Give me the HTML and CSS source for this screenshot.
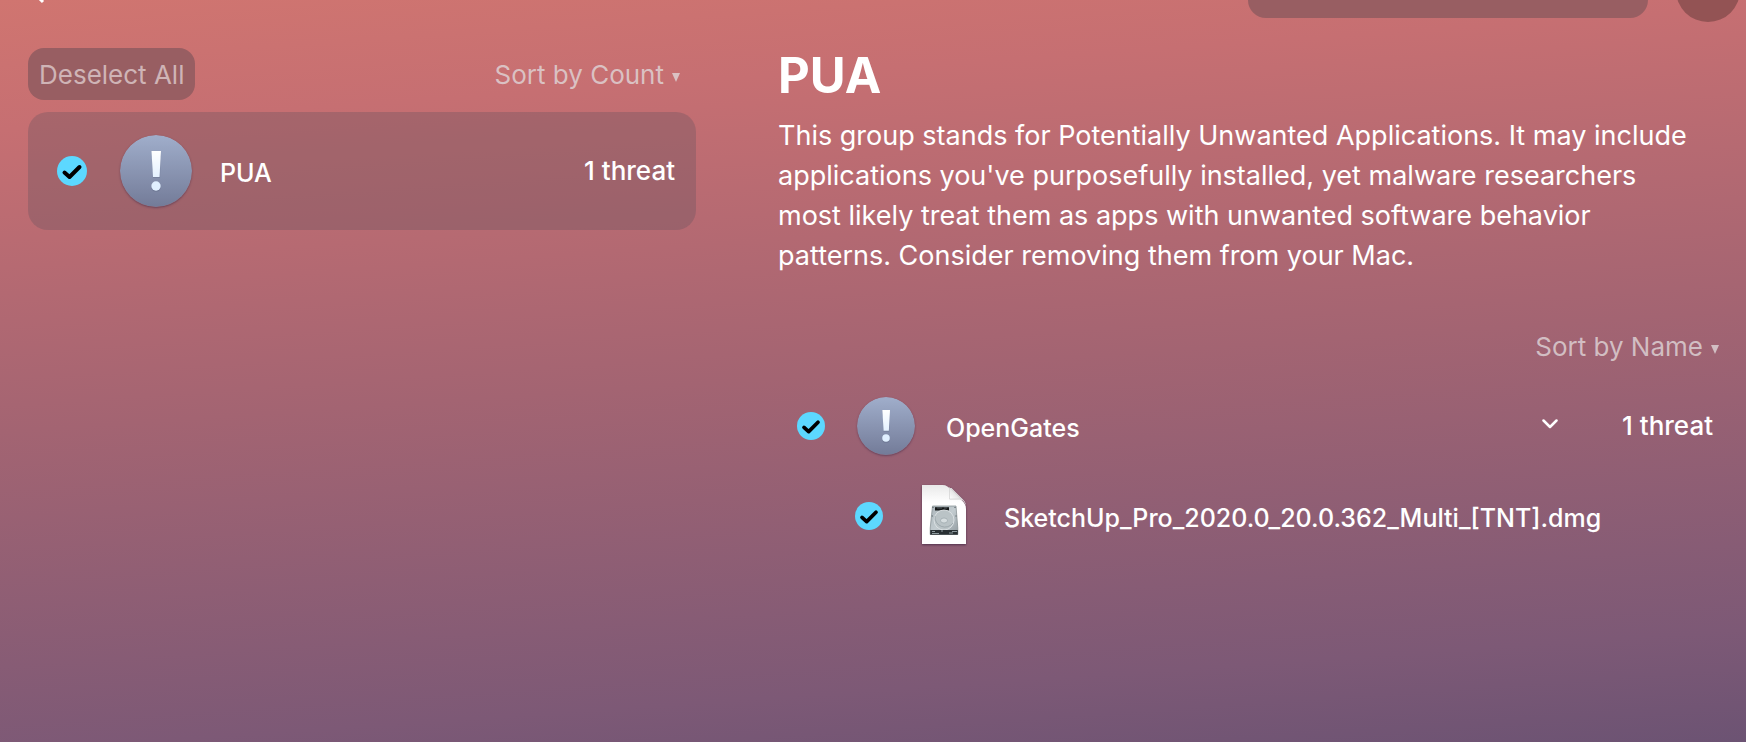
FILE: index.html
```html
<!DOCTYPE html>
<html lang="en">
<head>
<meta charset="utf-8">
<meta name="viewport" content="width=device-width, initial-scale=1">
<title>PUA</title>
<link rel="stylesheet" href="styles.css">
</head>
<body>
<svg class="defs" aria-hidden="true">
  <defs>
    <linearGradient id="badge" x1="0" y1="0" x2="0" y2="1"><stop offset="0" stop-color="#a0aecb"/><stop offset="1" stop-color="#737b98"/></linearGradient>
    <linearGradient id="mark" x1="0" y1="0" x2="0" y2="1"><stop offset="0" stop-color="#ffffff"/><stop offset="1" stop-color="#e4f1ff"/></linearGradient>
    <linearGradient id="metal" x1="0" y1="0" x2="1" y2="1"><stop offset="0" stop-color="#a9b3b8"/><stop offset="0.5" stop-color="#c3ccd0"/><stop offset="1" stop-color="#8f999e"/></linearGradient>
    <linearGradient id="fold" x1="0" y1="1" x2="1" y2="0"><stop offset="0" stop-color="#ffffff"/><stop offset="1" stop-color="#c9c9c9"/></linearGradient>
    <linearGradient id="paper" x1="0" y1="0" x2="0" y2="1"><stop offset="0" stop-color="#e9e9e9"/><stop offset="0.3" stop-color="#ffffff"/></linearGradient>
    <symbol id="alert" viewBox="0 0 72 72">
      <circle cx="36" cy="36" r="36" fill="url(#badge)"/>
      <path d="M32 17h9l-1 26h-7z" fill="#59627f" opacity=".3"/>
      <path d="M31.500 16h9.500l-1.500 26h-6.500z" fill="url(#mark)"/>
      <circle cx="36" cy="52" r="4.800" fill="#59627f" opacity=".35"/>
      <circle cx="36" cy="51" r="4.700" fill="#e0efff"/>
    </symbol>
  </defs>
</svg>
<header class="topbar">
  <button class="back" type="button" aria-label="Back"><svg viewBox="0 0 16 28"><path d="M14 1 2 14l12 12" /></svg></button>
  <input class="search" type="search" aria-label="Search">
  <button class="profile" type="button" aria-label="Account"></button>
</header>
<main class="columns">
  <section class="groups" aria-label="Threat groups">
    <div class="toolbar">
      <button class="deselect" type="button">Deselect All</button>
      <button class="sort" type="button">Sort by Count <svg class="caret" viewBox="0 0 8 9"><path d="M0 0h8L4 9z"/></svg></button>
    </div>
    <div class="card">
      <input class="check" type="checkbox" id="group-pua" checked>
      <svg class="alert" aria-hidden="true"><use href="#alert"/></svg>
      <label class="name" for="group-pua">PUA</label>
      <span class="count">1 threat</span>
    </div>
  </section>
  <section class="details">
    <h1>PUA</h1>
    <p>This group stands for Potentially Unwanted Applications. It may include applications you've purposefully installed, yet malware researchers most likely treat them as apps with unwanted software behavior patterns. Consider removing them from your Mac.</p>
    <button class="sort sort-name" type="button">Sort by Name <svg class="caret" viewBox="0 0 8 9"><path d="M0 0h8L4 9z"/></svg></button>
    <div class="threat">
      <input class="check" type="checkbox" id="opengates" checked>
      <svg class="alert" aria-hidden="true"><use href="#alert"/></svg>
      <label class="name" for="opengates">OpenGates</label>
      <button class="expand" type="button" aria-label="Collapse OpenGates"><svg viewBox="0 0 16 10"><path d="M1.500 1.500 8 8l6.500-6.500"/></svg></button>
      <span class="count">1 threat</span>
    </div>
    <div class="threat file">
      <input class="check" type="checkbox" id="dmg" checked>
      <svg class="document" viewBox="0 0 44 59" aria-hidden="true">
        <path d="M0 0h20.500c4 0 6 2 9 5l10 10c3 3 4.500 5 4.500 9v35H0z" fill="url(#paper)"/>
        <path d="M27.500 3v11.500H38c2.500 0 4.500 2 6 6 0-3-2-5-4.500-7.500L29.500 3z" fill="#e3e3e3"/>
        <path d="M27.500 2.500v11.500H39z" fill="url(#fold)" stroke="#cfcfcf" stroke-width=".6"/>
        <path d="M10.500 21h23.500l1.800 22v6.500H8.200V43z" fill="url(#metal)" stroke="#7f898d" stroke-width=".7"/>
        <path d="M13 22.200h14v3.300H13z" fill="#151819"/>
        <path d="M15 23h5M22 23h3" stroke="#667177" stroke-width=".7"/>
        <circle cx="22" cy="35" r="10" fill="#bac3c6" stroke="#dce2e4" stroke-width=".9"/>
        <path d="M13 31a10 10 0 0 0 18 7" fill="none" stroke="#8b979c" stroke-width=".6"/>
        <ellipse cx="22" cy="35.500" rx="3.500" ry="2.500" fill="#d6dddf" stroke="#93a0a5" stroke-width=".6"/>
        <path d="M8.200 45h27.600v4.700H8.200z" fill="#293033"/>
        <path d="M10 46.500h3M19 46h2M30 46.500h5M10 48.500h7M27 48h4" stroke="#9aa7ab" stroke-width=".9"/>
        <path d="M10.500 22.500h1M32.500 22.500h1M9.800 31h1M33.500 31h1" stroke="#475156"/>
      </svg>
      <label class="name" for="dmg">SketchUp_Pro_2020.0_20.0.362_Multi_[TNT].dmg</label>
    </div>
  </section>
</main>
</body>
</html>
```
FILE: styles.css
```css
* {
  box-sizing: border-box;
}

html {
  min-height: 100%;
  background: linear-gradient(176deg, #d07570 0%, #c66f72 15%, #a36472 50%, #7d5976 87%, #6c5373 100%);
}

body {
  margin: 0;
  color: #fff;
  font: 400 26px/32px Inter, "Liberation Sans", sans-serif;
}

button {
  padding: 0;
  border: 0;
  background: none;
  color: inherit;
  font: inherit;
  cursor: pointer;
}

.defs {
  position: absolute;
  width: 0;
  height: 0;
}

.topbar {
  display: flex;
  align-items: flex-end;
  height: 22px;
  padding: 0 6px 0 29px;
  overflow: hidden;
}

.back {
  width: 16px;
  height: 28px;
  margin-bottom: 18px;
}

.back svg {
  display: block;
  fill: none;
  stroke: #fff;
  stroke-width: 3;
}

.search {
  width: 400px;
  height: 54px;
  margin: 0 28px 4px auto;
  border: 0;
  border-radius: 18px;
  background: #985e62;
}

.profile {
  width: 64px;
  height: 64px;
  border-radius: 50%;
  background: #935354;
}

.columns {
  display: grid;
  grid-template-columns: 668fr 941fr;
  gap: 82px;
  padding: 26px 27px 0 28px;
}

.toolbar {
  display: flex;
  align-items: center;
  justify-content: space-between;
  padding-right: 16px;
  margin-bottom: 12px;
}

.deselect {
  height: 52px;
  padding: 2px 11px 0;
  border-radius: 16px;
  background: #985e62;
  color: #cfb4b6;
}

.sort {
  display: flex;
  align-items: center;
  gap: 8px;
  padding-top: 2px;
  color: rgba(224, 216, 218, 0.78);
}

.caret {
  width: 8px;
  height: 9px;
  margin-top: 4px;
  fill: currentColor;
}

.card,
.threat {
  display: flex;
  align-items: center;
  font-weight: 500;
}

.card {
  height: 118px;
  padding: 0 21px 0 29px;
  border-radius: 20px;
  background: rgba(92, 78, 94, 0.3);
}

.check {
  appearance: none;
  flex: none;
  width: 28px;
  height: 28px;
  margin: 0;
  border-radius: 50%;
  background: #5cd8ff url("data:image/svg+xml,%3Csvg xmlns='http://www.w3.org/2000/svg' viewBox='0 0 30 30'%3E%3Cpath d='M7.500 16.500l5 4.500L22.500 11' fill='none' stroke='%23000' stroke-width='4' stroke-linecap='round' stroke-linejoin='round'/%3E%3C/svg%3E") center / contain no-repeat;
}

.alert {
  flex: none;
  width: 58px;
  height: 58px;
  margin: 0 31px 0 32px;
  border-radius: 50%;
  box-shadow: 0 1px 2px rgba(60, 40, 70, 0.5);
}

.card .check {
  width: 30px;
  height: 30px;
}

.card .alert {
  width: 72px;
  height: 72px;
  margin: 0 28px 0 33px;
}

.name {
  padding-top: 4px;
  font-size: 25px;
}

.count {
  margin-left: auto;
}

h1 {
  margin: 0;
  font-size: 49px;
  font-weight: 700;
  line-height: 56px;
}

p {
  max-width: 912px;
  margin: 12px 0 0;
  font-size: 27px;
  line-height: 40px;
}

.sort-name {
  margin: 53px 0 0 auto;
}

.threat {
  height: 90px;
  padding: 0 6px 0 19px;
}

.sort-name + .threat {
  margin-top: 18px;
}

.expand {
  width: 16px;
  height: 32px;
  margin: 0 64px 0 auto;
}

.expand svg {
  display: block;
  width: 16px;
  height: 10px;
  margin-bottom: 4px;
  fill: none;
  stroke: #fff;
  stroke-width: 2.500;
  stroke-linecap: round;
  stroke-linejoin: round;
}

.expand + .count {
  margin-left: 0;
}

.file {
  padding-left: 77px;
}

.document {
  flex: none;
  width: 44px;
  height: 59px;
  margin: 0 38px 4px 39px;
  filter: drop-shadow(0 1px 1px rgba(40, 20, 50, 0.6));
}
```
